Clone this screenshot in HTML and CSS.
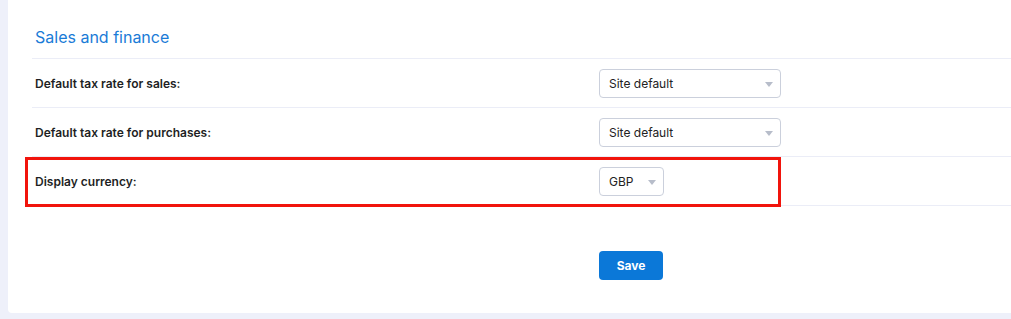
FILE: index.html
```html
<!DOCTYPE html>
<html lang="en">
<head>
<meta charset="UTF-8">
<meta name="viewport" content="width=device-width, initial-scale=1.0">
<title>Sales and finance</title>
<link rel="stylesheet" href="styles.css">
</head>
<body>
<div class="card">
    <h2 class="section-title">Sales and finance</h2>

    <div class="row">
        <div class="label">Default tax rate for sales:</div>
        <div class="control">
            <div class="select wide">
                <span>Site default</span>
                <svg width="8" height="5" viewBox="0 0 8 5"><path d="M0 0 H8 L4 5 Z" fill="#b7bdca"/></svg>
            </div>
        </div>
    </div>

    <div class="row">
        <div class="label">Default tax rate for purchases:</div>
        <div class="control">
            <div class="select wide">
                <span>Site default</span>
                <svg width="8" height="5" viewBox="0 0 8 5"><path d="M0 0 H8 L4 5 Z" fill="#b7bdca"/></svg>
            </div>
        </div>
    </div>

    <div class="row highlighted">
        <div class="label">Display currency:</div>
        <div class="control">
            <div class="select narrow">
                <span>GBP</span>
                <svg width="8" height="5" viewBox="0 0 8 5"><path d="M0 0 H8 L4 5 Z" fill="#b7bdca"/></svg>
            </div>
        </div>
    </div>

    <div class="actions">
        <button class="save">Save</button>
    </div>
</div>
</body>
</html>
```

FILE: styles.css
```css
body {
    margin: 0;
    padding: 0 0 0 8px;
    background-color: #eef0fa;
    font-family: Inter, "Noto Sans", sans-serif;
    color: #222;
    height: 319px;
    overflow: hidden;
}

.card {
    background-color: #fff;
    height: 313px;
    padding-left: 24px;
    border-radius: 0 0 0 4px;
    box-sizing: border-box;
}

.section-title {
    margin: 0;
    padding: 26px 0 0 3px;
    height: 59px;
    box-sizing: border-box;
    font-size: 16px;
    font-weight: 400;
    line-height: 22px;
    color: #1a7bd7;
    border-bottom: 1px solid #ebedf7;
}

.row {
    position: relative;
    display: flex;
    align-items: center;
    height: 49px;
    box-sizing: border-box;
    border-bottom: 1px solid #ebedf7;
}

.label {
    width: 567px;
    padding-left: 3px;
    box-sizing: border-box;
    font-size: 12px;
    font-weight: 600;
    color: #1e1f24;
}

.control {
    display: flex;
    padding-top: 1px;
}

.select {
    display: flex;
    align-items: center;
    justify-content: space-between;
    height: 29px;
    padding: 0 7px 0 9px;
    box-sizing: border-box;
    border: 1px solid #cbd0dc;
    border-radius: 4px;
    font-size: 12px;
    color: #222;
}

.select svg {
    margin-top: 1px;
}

.wide {
    width: 182px;
}

.narrow {
    width: 65px;
}

/* red annotation box around the currency row */
.highlighted::after {
    content: "";
    position: absolute;
    left: -7px;
    top: 0;
    width: 756px;
    height: 50px;
    box-sizing: border-box;
    border: 3px solid #f1140c;
}

.actions {
    padding: 45px 0 0 567px;
}

.save {
    width: 64px;
    height: 29px;
    border: none;
    border-radius: 4px;
    background-color: #0b78d8;
    color: #fff;
    font-family: Inter, "Noto Sans", sans-serif;
    font-size: 12px;
    font-weight: 700;
    cursor: pointer;
}
```
